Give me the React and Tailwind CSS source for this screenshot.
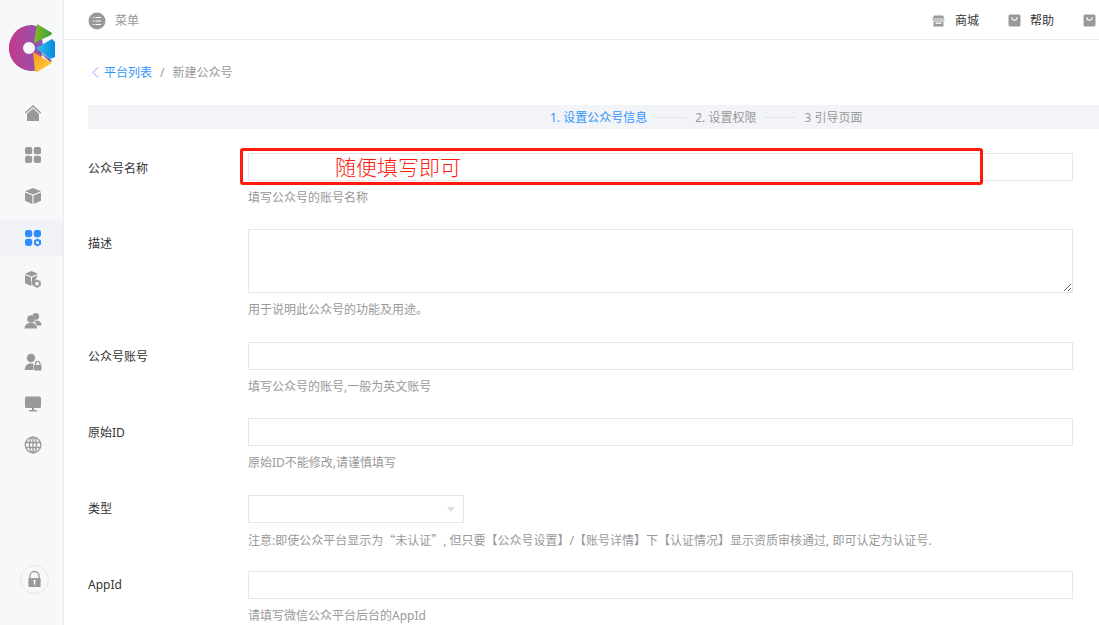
const Cls = "w-[18px] h-[18px]";

function Logo() {
  return (
    <svg width="52" height="52" viewBox="0 0 52 52" className="shrink-0">
      <defs>
        <linearGradient id="ring" x1="0" x2="1" y1="0" y2="0">
          <stop offset="0" stopColor="#c4388c" />
          <stop offset="1" stopColor="#8b58b0" />
        </linearGradient>
        <linearGradient id="green" x1="0" x2="1" y1="0" y2="0">
          <stop offset="0" stopColor="#8cbb1e" />
          <stop offset="1" stopColor="#2f9e3f" />
        </linearGradient>
        <linearGradient id="blue" x1="0" x2="1" y1="0" y2="0">
          <stop offset="0" stopColor="#3cc0ee" />
          <stop offset="1" stopColor="#0088dd" />
        </linearGradient>
        <linearGradient id="orange" x1="0" x2="1" y1="0" y2="1">
          <stop offset="0" stopColor="#ff9a1e" />
          <stop offset="1" stopColor="#ffd23c" />
        </linearGradient>
      </defs>
      <path fillRule="evenodd" fill="url(#ring)" d="M32 0a23 23 0 1 0 8 44.5L43 20 40 3A23 23 0 0 0 32 0ZM29 17a6 6 0 1 1 0 12 6 6 0 0 1 0-12Z" transform="translate(-9 1)" />
      <path fill="url(#green)" d="M25 19 28 0l15 9-1 2Z" />
      <path fill="url(#blue)" d="M27 24 43 15l3 3v15l-5 2Z" />
      <path fill="#7b5aa8" d="M29 27 41 35l2 2-2 1Z" />
      <path fill="url(#orange)" d="M24 28 43 39 28 48l-2-1Z" />
    </svg>
  );
}

const gray = "#999999";

function Home({ c }) {
  return (
    <svg viewBox="0 0 18 18" className={Cls} fill={c}>
      <path d="M9 1 .8 8.6l1 1L9 3l7.2 6.6 1-1Z" />
      <path d="M9 4.4 3 9.8V17h12V9.8Z" />
    </svg>
  );
}
function Apps({ c }) {
  return (
    <svg viewBox="0 0 18 18" className={Cls} fill={c}>
      <rect x="1" y="1" width="7.2" height="7.2" rx="2" />
      <rect x="9.8" y="1" width="7.2" height="7.2" rx="2" />
      <rect x="1" y="9.8" width="7.2" height="7.2" rx="2" />
      <rect x="9.8" y="9.8" width="7.2" height="7.2" rx="2" />
    </svg>
  );
}
function Box({ c }) {
  return (
    <svg viewBox="0 0 18 18" className={Cls} fill={c}>
      <path d="M9 1 17 4.3 9 7.4 1 4.3Z" />
      <path d="M1 5.6 8.4 8.5V17L1 13.8Z" />
      <path d="M17 5.6 9.6 8.5V17L17 13.8Z" />
    </svg>
  );
}
function AppsGear({ c }) {
  return (
    <svg viewBox="0 0 18 18" className={Cls} fill={c}>
      <rect x="1" y="1" width="7.2" height="7.2" rx="2.4" />
      <rect x="9.8" y="1" width="7.2" height="7.2" rx="2.4" />
      <rect x="1" y="9.8" width="7.2" height="7.2" rx="2.4" />
      <path fillRule="evenodd" d="M13.5 9.6 17 11.6v4L13.5 17.6 10 15.6v-4ZM13.5 11.9a1.7 1.7 0 1 0 0 3.4 1.7 1.7 0 0 0 0-3.4Z" />
    </svg>
  );
}
function BoxGear({ c }) {
  return (
    <svg viewBox="0 0 18 18" className={Cls} fill={c}>
      <path d="M7.500 1 14 3.800 7.500 6.400 1 3.800Z" />
      <path d="M1 5 7 7.400V16L1 13.300Z" />
      <path d="M14 5 8 7.400V10.500A5 5 0 0 0 8 16Z" />
      <path fillRule="evenodd" d="M13 9.500 16.800 11.600v4.200L13 18 9.200 15.800v-4.200ZM13 11.800a1.900 1.900 0 1 0 0 3.800 1.900 1.900 0 0 0 0-3.800Z" />
    </svg>
  );
}
function Users({ c }) {
  return (
    <svg viewBox="0 0 18 18" className={Cls} fill={c}>
      <circle cx="11.800" cy="4.400" r="3.300" />
      <path d="M10 9c2-.8 4-.8 5 0 1.500.8 2.500 2 2.500 4.500h-4.800C12.200 11.500 11.500 10 10 9Z" />
      <circle cx="7" cy="7" r="3.800" />
      <path d="M.6 16.500c0-3.500 2-5.500 6.400-5.500s6 2 6 5.500Z" />
    </svg>
  );
}
function UserLock({ c }) {
  return (
    <svg viewBox="0 0 18 18" className={Cls} fill={c}>
      <circle cx="7" cy="5" r="4.200" />
      <path d="M.8 17c0-4 2-6.500 6.200-6.500 1 0 1.800.1 2.500.4V17Z" />
      <path fillRule="evenodd" d="M11 12v-1.500a2.800 2.800 0 0 1 5.600 0V12h.9v5.500h-7.400V12Zm1.200 0h3.200v-1.500a1.600 1.600 0 0 0-3.200 0Z" />
    </svg>
  );
}
function Monitor({ c }) {
  return (
    <svg viewBox="0 0 18 18" className={Cls} fill={c}>
      <rect x="1" y="1.500" width="16" height="11.500" rx="1.500" />
      <rect x="8" y="13" width="2" height="2" />
      <rect x="5" y="15" width="8" height="1.500" rx=".5" />
    </svg>
  );
}
function Globe({ c }) {
  return (
    <svg viewBox="0 0 18 18" className={Cls} fill="none" stroke={c} strokeWidth="1.300">
      <circle cx="9" cy="9" r="7.800" />
      <ellipse cx="9" cy="9" rx="3.500" ry="7.800" />
      <path d="M9 1.200v15.600M1.600 6.500h14.800M1.600 11.500h14.800" />
    </svg>
  );
}
function Lock() {
  return (
    <svg viewBox="0 0 16 18" className="w-[15px] h-[17px]">
      <path d="M3 8V5.500a5 5 0 0 1 10 0V8" fill="none" stroke={gray} strokeWidth="1.400" />
      <rect x="1.500" y="7.500" width="13" height="9.500" fill={gray} />
      <rect x="7.400" y="10" width="1.300" height="4.500" fill="#fff" />
      <circle cx="8" cy="10.500" r="1.200" fill="#fff" />
    </svg>
  );
}
function Store() {
  return (
    <svg viewBox="0 0 13 13" className="w-[13px] h-[13px]" fill={gray}>
      <path d="M2 1.500h9l1.500 3H.5Z" />
      <rect x="0.500" y="4.500" width="12" height="2.500" fill="#c4c4c4" />
      <path d="M1.500 7.500h10V12.500h-10Z" />
      <rect x="3.500" y="8.500" width="6" height="1.300" fill="#fff" />
    </svg>
  );
}
function Bag() {
  return (
    <svg viewBox="0 0 13 13" className="w-[13px] h-[13px]">
      <rect x=".5" y=".5" width="12" height="12" rx="1.500" fill={gray} />
      <path d="M3.800 3.300c0 4 5.400 4 5.400 0" fill="none" stroke="#fff" strokeWidth="1.100" />
    </svg>
  );
}
function MenuIcon() {
  return (
    <svg viewBox="0 0 18 18" className="w-[18px] h-[18px]">
      <circle cx="9" cy="9" r="8.500" fill={gray} />
      <path d="M5 5.500h1.400M7.500 5.500H13M5 9h1.400M7.500 9H13M5 12.500h1.400M7.500 12.500H13" stroke="#fff" strokeWidth="1.200" />
    </svg>
  );
}

const navItems = [Home, Apps, Box, AppsGear, BoxGear, Users, UserLock, Monitor, Globe];

function Sidebar() {
  return (
    <aside className="w-[64px] shrink-0 h-full flex flex-col bg-[#f7f8fa] border-r border-[#e9ebee]">
      <div className="h-[92.5px] shrink-0 pl-[9px] pt-[24px]">
        <Logo />
      </div>
      {navItems.map((Icon, i) => (
        <div key={i} className="h-[41.5px] shrink-0 flex items-center">
          <div className={i === 3 ? "w-full h-[36px] flex items-center justify-center pl-[3px] bg-[#f1f2f6]" : "w-full h-[36px] flex items-center justify-center pl-[3px]"}>
            <Icon c={i === 3 ? "#2d8cff" : gray} />
          </div>
        </div>
      ))}
      <div className="mt-auto mb-[31px] ml-[20px] w-[29px] h-[29px] rounded-full border border-[#e6e7ea] flex items-center justify-center">
        <Lock />
      </div>
    </aside>
  );
}

function Header() {
  return (
    <header className="h-[40px] shrink-0 flex items-center pl-[24px] pt-[2px] border-b border-[#e9ebee] overflow-hidden">
      <MenuIcon />
      <span className="ml-[9px] text-[#999999]">菜单</span>
      <div className="ml-auto flex items-center gap-[29px] pr-[3px]">
        <div className="flex items-center gap-[10px] text-[#333333]"><Store /><span>商城</span></div>
        <div className="flex items-center gap-[9px] text-[#333333]"><Bag /><span>帮助</span></div>
        <Bag />
      </div>
    </header>
  );
}

function Steps() {
  return (
    <div className="h-[24px] shrink-0 ml-[24px] pt-[1px] bg-[#f3f4f8] flex items-center pl-[462px] text-[#999999]">
      <span className="text-[#3296fa]">1. 设置公众号信息</span>
      <span className="w-[32px] h-px bg-[#e3e4e8] mx-[8px]" />
      <span>2. 设置权限</span>
      <span className="w-[32px] h-px bg-[#e3e4e8] mx-[8px]" />
      <span>3 引导页面</span>
    </div>
  );
}

function Row({ label, help, children, extra = "mb-[21px]", pad = "pt-[1px]" }) {
  return (
    <div className={"flex " + extra}>
      <label className={"w-[160px] shrink-0 text-[#333333] leading-[28px] " + pad}>{label}</label>
      <div className="flex-1 min-w-0">
        {children}
        <p className="mt-[7px] h-[20px] leading-[20px] text-[#999999] whitespace-nowrap">{help}</p>
      </div>
    </div>
  );
}

const inputCls = "block w-full h-[28px] border border-[#e6e7ea] bg-white outline-none";
const Q = ({ children }) => <span className="font-['Noto_Sans_CJK_SC']">{children}</span>;

export default function App() {
  return (
    <div className="relative w-[1099px] h-[625px] overflow-hidden flex bg-white text-[12px] font-['Noto_Sans','Noto_Sans_CJK_SC',sans-serif]">
      <Sidebar />
      <main className="flex-1 min-w-0 flex flex-col">
        <Header />
        <nav className="h-[65px] shrink-0 pl-[28px] flex items-center">
          <svg viewBox="0 0 7 11" className="w-[7px] h-[11px]" fill="none" stroke="#a78bfa" strokeWidth="1">
            <path d="M6 .5 1 5.500l5 5" />
          </svg>
          <a className="ml-[5px] text-[#3296fa]">平台列表</a>
          <span className="mx-[8px] text-[#999999]">/</span>
          <span className="text-[#999999]">新建公众号</span>
        </nav>
        <Steps />
        <form className="pl-[24px] pr-[26px] pt-[24px]">
          <Row label="公众号名称" help="填写公众号的账号名称" pad="pt-[2px]">
            <input className={inputCls} />
          </Row>
          <Row label="描述" help="用于说明此公众号的功能及用途。" extra="mb-[22px]">
            <textarea className="block w-full h-[64px] border border-[#e6e7ea] bg-white outline-none resize-y" />
          </Row>
          <Row label="公众号账号" help="填写公众号的账号,一般为英文账号">
            <input className={inputCls} />
          </Row>
          <Row label="原始ID" help="原始ID不能修改,请谨慎填写" extra="mb-[22px]">
            <input className={inputCls} />
          </Row>
          <Row label="类型" pad="pt-0" help={<>注意:即使公众平台显示为<Q>“</Q>未认证<Q>”</Q>, 但只要【公众号设置】/【账号详情】下【认证情况】显示资质审核通过, 即可认定为认证号.</>}>
            <div className="relative w-[216px] h-[28px] border border-[#e6e7ea] bg-white">
              <span className="absolute right-[8px] top-[11px] w-0 h-0 border-x-[4px] border-x-transparent border-t-[5px] border-t-[#dddddd]" />
            </div>
          </Row>
          <Row label="AppId" pad="pt-0" help="请填写微信公众平台后台的AppId">
            <input className={inputCls} />
          </Row>
        </form>
      </main>
      <div className="absolute left-[240px] top-[148px] w-[743px] h-[37px] border-[3px] border-[#ff1a0d] rounded-[3px] pointer-events-none">
        <span className="absolute left-[92px] top-[1px] text-[21px] leading-[29px] font-light text-[#ff1a0d] whitespace-nowrap font-['Noto_Sans_CJK_SC']">随便填写即可</span>
      </div>
    </div>
  );
}
